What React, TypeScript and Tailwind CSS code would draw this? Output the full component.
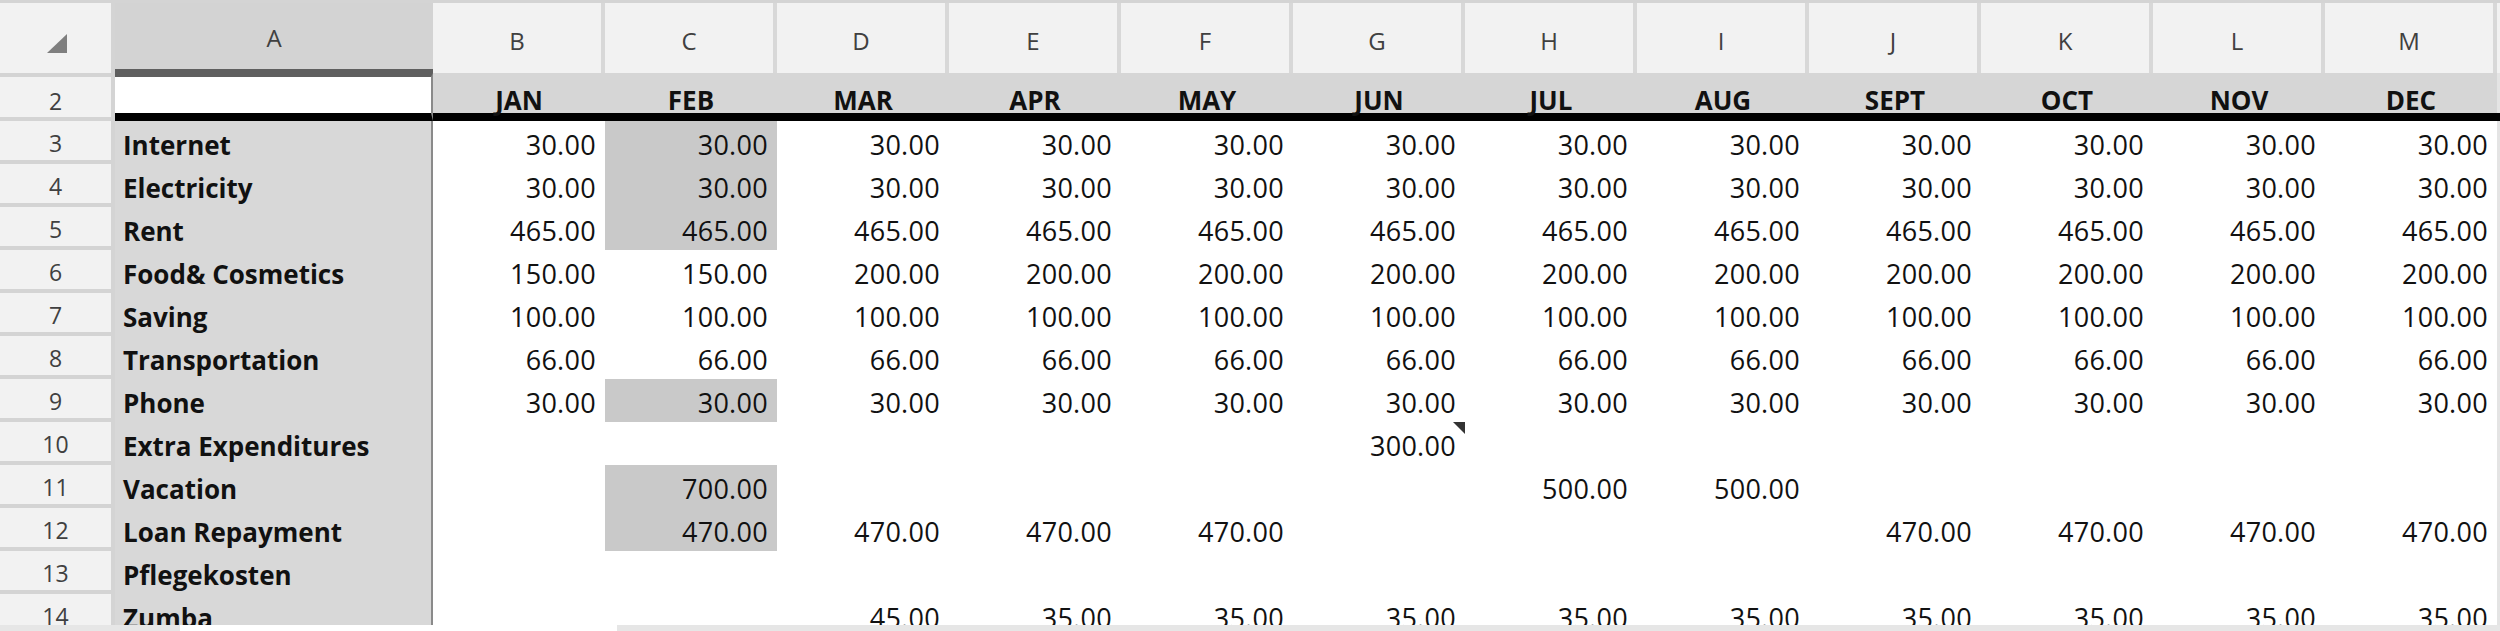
import React from "react";

const months = ["JAN", "FEB", "MAR", "APR", "MAY", "JUN", "JUL", "AUG", "SEPT", "OCT", "NOV", "DEC"];
const letters = ["B", "C", "D", "E", "F", "G", "H", "I", "J", "K", "L", "M"];

const fill = (v: string) => Array(12).fill(v) as string[];

type Row = { n: number; label: string; values: string[]; hl: boolean };

const rows: Row[] = [
  { n: 3, label: "Internet", values: fill("30.00"), hl: true },
  { n: 4, label: "Electricity", values: fill("30.00"), hl: true },
  { n: 5, label: "Rent", values: fill("465.00"), hl: true },
  { n: 6, label: "Food& Cosmetics", values: ["150.00", "150.00", ...Array(10).fill("200.00")], hl: false },
  { n: 7, label: "Saving", values: fill("100.00"), hl: false },
  { n: 8, label: "Transportation", values: fill("66.00"), hl: false },
  { n: 9, label: "Phone", values: fill("30.00"), hl: true },
  { n: 10, label: "Extra Expenditures", values: ["", "", "", "", "", "300.00", "", "", "", "", "", ""], hl: false },
  { n: 11, label: "Vacation", values: ["", "700.00", "", "", "", "", "500.00", "500.00", "", "", "", ""], hl: true },
  { n: 12, label: "Loan Repayment", values: ["", "470.00", "470.00", "470.00", "470.00", "", "", "", "470.00", "470.00", "470.00", "470.00"], hl: true },
  { n: 13, label: "Pflegekosten", values: fill(""), hl: false },
  { n: 14, label: "Zumba", values: ["", "", "45.00", ...Array(9).fill("35.00")], hl: false },
];

const grid = "grid grid-cols-[115px_318px_repeat(12,172px)_3px]";

export default function App() {
  return (
    <div className="w-[2500px] h-[631px] overflow-hidden bg-white flex flex-col font-['Open_Sans','Noto_Sans',sans-serif] text-[#111]">
      <div className="h-[625px] overflow-hidden flex flex-col">
        {/* top strip */}
        <div className="h-[3px] bg-[#d4d4d4] shrink-0" />
        {/* column header row */}
        <div className={`${grid} h-[70px] shrink-0`}>
          <div className="bg-[#f2f2f2] border-r-[4px] border-[#d4d4d4] flex items-center justify-center">
            <svg width="21" height="20" viewBox="0 0 21 20" className="ml-[4px] mt-[11px]">
              <polygon points="20,0 20,19 0,19" fill="#7f7f7f" />
            </svg>
          </div>
          <div className="bg-[#d3d3d3] border-b-[4px] border-[#5f5f5f] flex items-center justify-center pt-[4px] text-[24px] text-[#404040]">
            A
          </div>
          {letters.map((l) => (
            <div
              key={l}
              className="bg-[#f2f2f2] border-r-[4px] border-[#d8d8d8] flex items-center justify-center pt-[6px] text-[24px] text-[#404040]"
            >
              {l}
            </div>
          ))}
          <div className="bg-[#f2f2f2]" />
        </div>
        {/* row 2 */}
        <div className={`${grid} h-[48px] shrink-0`}>
          <div className="bg-[#f2f2f2] border-r-[4px] border-y-[4px] border-[#d4d4d4] flex items-end justify-center pb-[4px] text-[23px] leading-none text-[#404040]">
            2
          </div>
          <div className="bg-white border-t-[4px] border-t-[#5f5f5f] border-b-[8px] border-b-black border-r-[2px] border-r-[#8a8a8a]" />
          {months.map((m) => (
            <div
              key={m}
              className="bg-[#d6d6d6] border-b-[8px] border-black flex items-end justify-center text-[26px] leading-none font-bold"
            >
              {m}
            </div>
          ))}
          <div className="bg-[#e4e4e4] border-b-[8px] border-black" />
        </div>
        {/* data rows */}
        {rows.map((r) => (
          <div key={r.n} className={`${grid} h-[43px] shrink-0`}>
            <div className="bg-[#f2f2f2] border-r-[4px] border-b-[4px] border-[#d4d4d4] flex items-end justify-center pb-[5px] text-[23px] leading-none text-[#404040]">
              {r.n}
            </div>
            <div className="bg-[#d8d8d8] border-r-[2px] border-[#8a8a8a] flex items-end pl-[8px] pb-[6px] text-[26px] leading-none font-bold">
              {r.label}
            </div>
            {r.values.map((v, i) => (
              <div
                key={i}
                className={`relative flex items-end justify-end pr-[9px] pb-[6px] text-[27px] tracking-[0.3px] leading-none ${
                  i === 1 && r.hl ? "bg-[#c9c9c9]" : "bg-white"
                }`}
              >
                {v}
                {r.n === 10 && i === 5 && (
                  <svg width="12" height="12" viewBox="0 0 12 12" className="absolute top-0 right-0">
                    <polygon points="0,0 12,0 12,12" fill="#333" />
                  </svg>
                )}
              </div>
            ))}
            <div className="bg-[#e4e4e4]" />
          </div>
        ))}
      </div>
      {/* bottom bar */}
      <div className="h-[6px] flex shrink-0">
        <div className="w-[180px] bg-[#e6e6e6]" />
        <div className="w-[437px] bg-white" />
        <div className="flex-1 bg-[#e6e6e6]" />
      </div>
    </div>
  );
}
